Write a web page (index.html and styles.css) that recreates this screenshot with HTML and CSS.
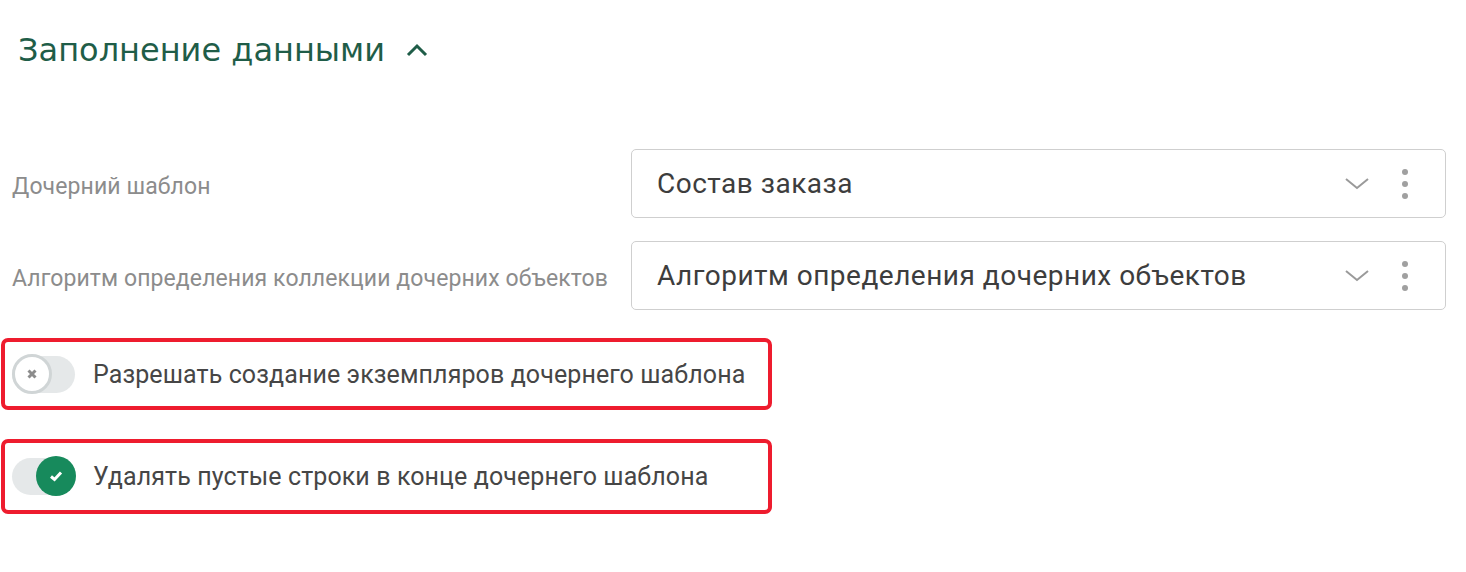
FILE: index.html
```html
<!DOCTYPE html>
<html>
    <head>
        <title>Заполнение данными</title>
        <link rel="stylesheet" href="styles.css">
    </head>
    <body>
        <div class="section-head">
            <span class="section-title">Заполнение данными</span>
            <svg class="collapse-icon" width="22" height="14" viewBox="0 0 22 14">
                <path d="M2 12 L11 3 L20 12" fill="none" stroke="#1f5d48" stroke-width="3"/>
            </svg>
        </div>

        <div class="field-row first">
            <div class="field-label">Дочерний шаблон</div>
            <div class="select-box">
                <span class="select-value">Состав заказа</span>
                <svg class="chevron" width="24" height="12" viewBox="0 0 24 12">
                    <path d="M1 1 L12 10 L23 1" fill="none" stroke="#9a9a9a" stroke-width="2"/>
                </svg>
                <div class="kebab"><span></span><span></span><span></span></div>
            </div>
        </div>

        <div class="field-row">
            <div class="field-label">Алгоритм определения коллекции дочерних объектов</div>
            <div class="select-box">
                <span class="select-value">Алгоритм определения дочерних объектов</span>
                <svg class="chevron" width="24" height="12" viewBox="0 0 24 12">
                    <path d="M1 1 L12 10 L23 1" fill="none" stroke="#9a9a9a" stroke-width="2"/>
                </svg>
                <div class="kebab"><span></span><span></span><span></span></div>
            </div>
        </div>

        <div class="toggle-row">
            <div class="toggle">
                <div class="knob">
                    <svg width="12" height="12" viewBox="0 0 12 12">
                        <path d="M2.5 2.5 L9.5 9.5 M9.5 2.5 L2.5 9.5" stroke="#8c8c8c" stroke-width="3"/>
                    </svg>
                </div>
            </div>
            <span class="toggle-label">Разрешать создание экземпляров дочернего шаблона</span>
        </div>

        <div class="toggle-row second">
            <div class="toggle on">
                <div class="knob">
                    <svg width="14" height="12" viewBox="0 0 14 12">
                        <path d="M2 6.5 L5.5 9.5 L12 2.5" fill="none" stroke="#fff" stroke-width="3"/>
                    </svg>
                </div>
            </div>
            <span class="toggle-label">Удалять пустые строки в конце дочернего шаблона</span>
        </div>
    </body>
</html>
```

FILE: styles.css
```css
body{
    margin:0;
    background-color:white;
    font-family:Roboto, "Liberation Sans", sans-serif;
}

.section-head{
    display:flex;
    align-items:center;
    padding:30px 0 0 18px;
    height:40px;
}

.section-title{
    font-family:"DejaVu Sans", Verdana, sans-serif;
    font-size:32px;
    color:#1f5d48;
}

.collapse-icon{
    margin-left:21px;
}

.field-row{
    display:flex;
    align-items:center;
    margin-top:23px;
    padding-left:12px;
}

.field-row.first{
    margin-top:79px;
}

.field-label{
    width:619px;
    padding-top:5px;
    font-size:23px;
    letter-spacing:0.1px;
    color:#8c8c8c;
}

.select-box{
    display:flex;
    align-items:center;
    box-sizing:border-box;
    width:815px;
    height:69px;
    padding:0 37px 0 25px;
    border:1px solid #cfcfcf;
    border-radius:5px;
}

.select-value{
    flex:1;
    font-size:28px;
    letter-spacing:0.5px;
    color:#3d3d3d;
}

.chevron{
    margin-right:33px;
}

.kebab{
    display:flex;
    flex-direction:column;
    gap:6px;
}

.kebab span{
    width:6px;
    height:6px;
    border-radius:3px;
    background-color:#a0a0a0;
}

.toggle-row{
    display:flex;
    align-items:center;
    box-sizing:border-box;
    width:771px;
    height:72px;
    margin:28px 0 0 1px;
    padding-left:7px;
    border:4px solid #ee1c2e;
    border-radius:7px;
}

.toggle-row.second{
    margin-top:29px;
    height:75px;
}

.toggle{
    position:relative;
    width:63px;
    height:37px;
    border-radius:19px;
    background-color:#e5e8e9;
    margin-right:18px;
}

.knob{
    position:absolute;
    left:0;
    top:-2px;
    box-sizing:border-box;
    width:40px;
    height:40px;
    border:3px solid #d0d5d6;
    border-radius:50%;
    background-color:white;
    display:flex;
    align-items:center;
    justify-content:center;
}

.toggle.on .knob{
    left:24px;
    border:none;
    background-color:#178a5c;
}

.toggle-label{
    font-size:25px;
    letter-spacing:0.1px;
    color:#464646;
}
```
